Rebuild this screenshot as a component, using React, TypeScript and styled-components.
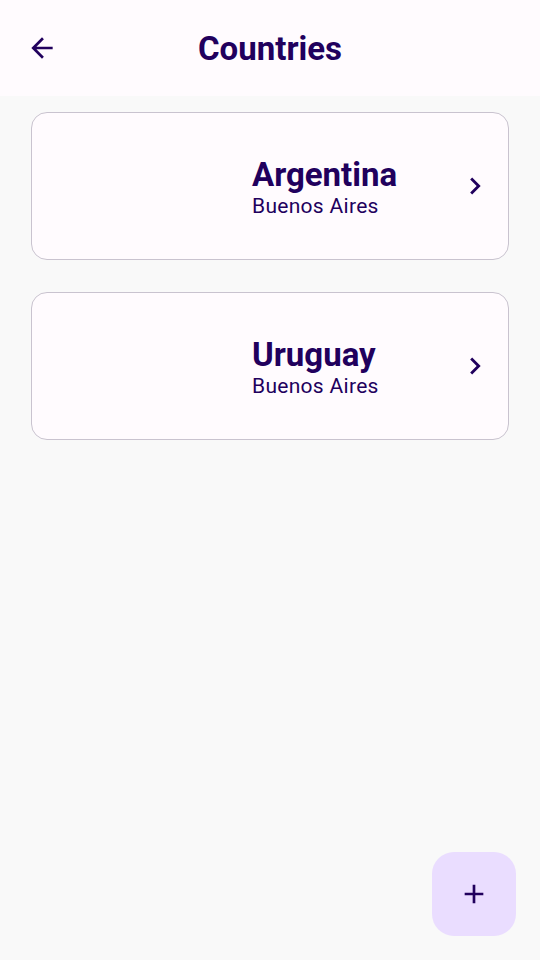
import * as React from "react";
import styled, { createGlobalStyle } from "styled-components";

const GlobalStyle = createGlobalStyle`
  html, body {
    margin: 0;
    padding: 0;
    height: 100%;
  }
  body {
    font-family: Roboto, "Noto Sans", sans-serif;
    background: #f9f9f9;
  }
  #root {
    height: 100%;
  }
`;

const INK = "#21005d";

const Screen = styled.div`
  height: 960px;
  display: flex;
  flex-direction: column;
  background: #f9f9f9;
  position: relative;
`;

const TopBar = styled.header`
  height: 96px;
  background: #fffbfe;
  display: grid;
  grid-template-columns: 84px 1fr 84px;
  align-items: center;
`;

const IconButton = styled.button`
  width: 84px;
  height: 96px;
  border: none;
  background: transparent;
  display: flex;
  align-items: center;
  justify-content: center;
  padding: 0;
  color: ${INK};
`;

const Title = styled.h1`
  margin: 0;
  text-align: center;
  font-size: 33px;
  font-weight: 700;
  color: ${INK};
`;

const List = styled.main`
  display: flex;
  flex-direction: column;
  gap: 32px;
  padding: 16px 31px;
`;

const Card = styled.div`
  height: 146px;
  border: 1px solid #c9c3cf;
  border-radius: 16px;
  background: #fffbfe;
  display: flex;
  align-items: center;
`;

const Media = styled.div`
  width: 220px;
  flex-shrink: 0;
`;

const Info = styled.div`
  flex: 1;
  display: flex;
  flex-direction: column;
  margin-top: 4px;
`;

const Name = styled.div`
  font-size: 33px;
  font-weight: 700;
  line-height: 36px;
  color: ${INK};
`;

const Capital = styled.div`
  font-size: 21px;
  line-height: 26px;
  color: ${INK};
  letter-spacing: 0.3px;
`;

const Chevron = styled.div`
  width: 50px;
  display: flex;
  align-items: center;
  color: ${INK};
`;

const Fab = styled.button`
  position: absolute;
  right: 24px;
  bottom: 24px;
  width: 84px;
  height: 84px;
  border: none;
  border-radius: 22px;
  background: #eaddff;
  display: flex;
  align-items: center;
  justify-content: center;
  color: ${INK};
`;

const countries = [
  { name: "Argentina", capital: "Buenos Aires" },
  { name: "Uruguay", capital: "Buenos Aires" },
];

export default function App() {
  return (
    <Screen>
      <GlobalStyle />
      <TopBar>
        <IconButton>
          <svg width="32" height="32" viewBox="0 0 24 24" fill="currentColor">
            <path d="M20 11H7.83l5.59-5.59L12 4l-8 8 8 8 1.41-1.41L7.83 13H20v-2z" />
          </svg>
        </IconButton>
        <Title>Countries</Title>
        <div />
      </TopBar>
      <List>
        {countries.map((c) => (
          <Card key={c.name}>
            <Media />
            <Info>
              <Name>{c.name}</Name>
              <Capital>{c.capital}</Capital>
            </Info>
            <Chevron>
              <svg width="34" height="34" viewBox="0 0 24 24" fill="currentColor">
                <path d="M8.59 16.59L13.17 12 8.59 7.41 10 6l6 6-6 6-1.41-1.41z" />
              </svg>
            </Chevron>
          </Card>
        ))}
      </List>
      <Fab>
        <svg width="32" height="32" viewBox="0 0 24 24" fill="currentColor">
          <path d="M19 13h-6v6h-2v-6H5v-2h6V5h2v6h6v2z" />
        </svg>
      </Fab>
    </Screen>
  );
}
